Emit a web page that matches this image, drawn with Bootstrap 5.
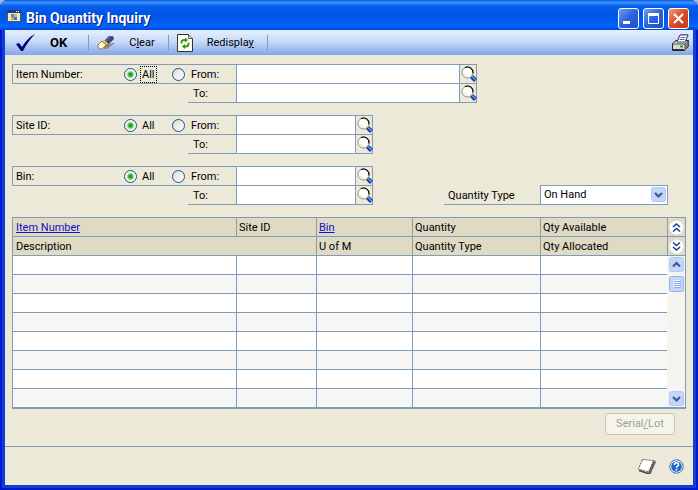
<!DOCTYPE html>
<html lang="en">
<head>
<meta charset="utf-8">
<meta name="viewport" content="width=device-width, initial-scale=1">
<title>Bin Quantity Inquiry</title>
<link href="https://cdn.jsdelivr.net/npm/bootstrap@5.3.0/dist/css/bootstrap.min.css" rel="stylesheet">
<style>
:root{--line:#7f9db9;--face:#ece9d8;--head:#dfdbc3}
body{font:11px/18px Roboto,"Liberation Sans",sans-serif;color:#000;background:#9db4d8}
button,input,select{font:inherit;color:inherit}
svg{display:block;flex:none}
.win{min-height:100vh;background:#0842d8;border-radius:8px 8px 0 0;border:solid #0019cf;border-width:0 2px 2px;padding:0 3px 3px}
.titlebar{height:30px;margin:0 -5px;padding:4px 5px 0 7px;border-radius:8px 8px 0 0;background:linear-gradient(#0a5ae0 0,#3c93ff 8%,#0661ee 20%,#0054e3 45%,#005cf5 75%,#0066ff 88%,#0046d0 100%)}
.titlebar h1{font:bold 14px/20px Roboto,"Liberation Sans",sans-serif;color:#fff;text-shadow:1px 1px #0a1883}
.wbtn{width:21px;height:21px;padding:0;border:1px solid #fff;border-radius:3px;background:linear-gradient(135deg,#6f9cf5,#2b62dd 50%,#2050c8)}
.wbtn.shut{background:linear-gradient(135deg,#f09a80,#da4b26 50%,#c03a16)}
.toolbar{height:25px;padding:0 3px 0 11px;background:linear-gradient(#e6effd,#c8daf9 45%,#84a6e6)}
.tool{border:0;background:none;padding:0;height:24px;display:flex;align-items:center;gap:14px;margin-right:13px}
.tool.ok{font-size:13px;font-weight:700;margin-right:21px}
.tool.print{margin-right:0}
.sep{width:1px;height:16px;background:#7e9bc8}
.face{background:var(--face)}
.inquiry{padding:9px 7px 0;display:grid;gap:12px}
.rng{display:grid;grid-template-columns:112px 48px 16px 48px minmax(0,1fr) 17px;grid-template-rows:19px 20px;border-right:1px solid transparent;max-width:361px;flex:1 1 361px}
.rng.wide{max-width:465px}
.rng>*{border:0 solid var(--line);border-top-width:1px}
.rng .what{border-left-width:1px;padding-left:3px;line-height:20px}
.rng .pad3{grid-column:span 3}
.rng .low{border-bottom-width:1px}
.rng .txt{padding-left:3px;line-height:20px}
.rng .to{padding-left:5px;line-height:20px}
.rng input[type=text]{border-left-width:1px;border-radius:0;background:#fff;min-width:0;width:100%;padding:0 4px}
.rng .look{padding:0 0 0 1px;width:18px;border-left-width:1px;border-right-width:1px;background:var(--face)}
.pickone{display:flex;align-items:center;gap:4px}
input[type=radio]{appearance:none;flex:none;width:13px;height:13px;margin:0;border:1px solid #21517f;border-radius:50%;background:linear-gradient(135deg,#dcdcd5,#fff)}
input[type=radio]:checked{background:radial-gradient(circle,#1f9f1f 1px,#3db83d 2px,#f6f6f2 4px)}
.pickone label{line-height:15px;padding:0 1px}
.dotted{outline:1px dotted #000}
.qt{margin-right:18px}
.qt label{width:96px;height:20px;padding-left:4px;line-height:22px;border-bottom:1px solid var(--line)}
.qt .pick{width:128px;height:20px}
.qt select{appearance:none;display:block;width:100%;height:20px;border:1px solid var(--line);border-radius:0;background:#fff;padding:0 20px 0 3px}
.qt svg{position:absolute;right:2px;top:2px;pointer-events:none}
.list{border:1px solid var(--line);border-bottom-width:2px}
.list table{table-layout:fixed;width:100%;border-collapse:separate;border-spacing:0}
.list td,.list th{height:19px;padding:0 3px;font-weight:400;line-height:18px;border-bottom:1px solid var(--line);border-left:1px solid var(--line);white-space:nowrap}
.list th{background:var(--head);padding:2px 2px 0;line-height:16px}
.list td:first-child,.list th:first-child{border-left:0}
.list th:first-child{padding-left:3px}
.list tbody td{background:#fff}
.list tbody tr:nth-child(even) td{background:#f6f7f4}
.list tbody tr:last-child td{border-bottom:0;height:18px}
.list a{color:#1010cc}
.c-site{width:80px}.c-bin{width:96px}.c-qty{width:128px}.c-av{width:127px}
.side{width:18px}
.rolls{background:var(--head);border-left:1px solid var(--line)}
.rolls button{width:100%;height:19px;padding:1px;border:0;border-bottom:1px solid var(--line);background:none;display:block}
.track{padding:1px 1px 1px 2px;background:#f5f4ee}
.track button{border:0;background:none;padding:0;display:block}
.serial{width:70px;height:22px;border:1px solid #c9c7ba;border-radius:3px;background:#f5f4ea;color:#a1a192;padding:0;font-size:11px;margin-right:10px}
.foot{height:39px;padding-right:9px;gap:12px;border-top:1px solid var(--line)}
.plain{border:0;background:none;padding:0}
</style>
</head>
<body>
<svg width="0" height="0" class="position-absolute" aria-hidden="true"><defs>
<g id="lens"><path d="M10.500 10.500l4 4" stroke="#12349c" stroke-width="4"/><path d="M11 10.500l3.500 3.500" stroke="#6fa4f4" stroke-width="1.200"/><circle cx="6.500" cy="6.500" r="5.500" fill="#fffef8" stroke="#888"/><path d="M4 1.600A5.500 5.500 0 0 1 11.900 7.500" fill="none" stroke="#000" stroke-width="1.100"/><path d="M3.500 8.500l2.500 2" stroke="#b8b0a0" stroke-dasharray="1"/></g>
<g id="box"><rect x=".5" y=".5" width="14" height="14" rx="2" fill="#c4d4fb" stroke="#b4c8f4"/></g>
</defs></svg>
<main class="win d-flex flex-column">
<header class="titlebar d-flex align-items-start">
<svg class="mt-1 me-1" width="15" height="16"><path d="M.5 2.500h13v11H.5z" fill="#ece9d8" stroke="#555"/><path d="M0 2h14v3H0z" fill="#243c78"/><path d="M9 3h1v1H9zM11 3h1v1h-1z" fill="#fff"/><path d="M4 6h3v3H4z" fill="#3d8be8"/><path d="M7 6h3v3H7z" fill="#e8b92c"/><path d="M4 9h3v3H4z" fill="#e0a020"/><path d="M7 9h3v3H7z" fill="#2f7adc"/></svg>
<h1 class="m-0 flex-grow-1 pt-1">Bin Quantity Inquiry</h1>
<div class="d-flex gap-1 pt-1 pe-1">
<button type="button" class="wbtn" aria-label="Minimize"><svg width="19" height="19"><path d="M4 12h7v3H4z" fill="#fff"/></svg></button>
<button type="button" class="wbtn" aria-label="Maximize"><svg width="19" height="19"><path d="M4.500 4.500h10v10h-10z" fill="none" stroke="#fff"/><path d="M4 4h11v3H4z" fill="#fff"/></svg></button>
<button type="button" class="wbtn shut" aria-label="Close"><svg width="19" height="19"><path d="M5 5l9 9M14 5l-9 9" stroke="#fff" stroke-width="2.200"/></svg></button>
</div>
</header>
<nav class="toolbar d-flex align-items-center">
<button type="button" class="tool ok"><svg width="20" height="20"><path d="M0 11l3-1 3 4C9 9 13 4 19 1 14 6 10 12 7 18H5z" fill="#000080"/></svg>OK</button>
<i class="sep me-2"></i>
<button type="button" class="tool"><svg width="18" height="18"><path d="M7 12l9-3h2l-8 6H7z" fill="#8b8b86"/><path d="M7 7L12 2h4l1 3-7 7z" fill="#45457e"/><path d="M9 7l5-5" stroke="#7070aa"/><path d="M6.500 6.500l4 4" stroke="#e8c331" stroke-width="2"/><path d="M1 11l4-4 4 4-4 4H2L1 13z" fill="#fff8d0" stroke="#8a7b48"/></svg><span>C<u>l</u>ear</span></button>
<i class="sep me-2"></i>
<button type="button" class="tool"><svg width="16" height="18"><path d="M.5.500h11l4 4v13H.5z" fill="#fffff0" stroke="#333"/><path d="M11.500.500v4h4" fill="#ddd" stroke="#555"/><path d="M4.500 9.500V8q0-2 3-2h1M11.500 8.500V10q0 2.500-3 2.500H7" fill="none" stroke="#269326" stroke-width="1.800"/><path d="M8 3.500l3 2.500-3 2.500zM8 10l-3 2.500L8 15z" fill="#269326"/></svg><span>Redispla<u>y</u></span></button>
<i class="sep"></i>
<button type="button" class="tool print ms-auto" aria-label="Print"><svg width="19" height="18"><path d="M6 8L9 1h8l-3 7z" fill="#fff" stroke="#446"/><path d="M9.500 3.500h5M8.500 5.500h5" stroke="#3b6dc4"/><path d="M1.500 9.500L5 6.500h12.500v6l-4 4h-12z" fill="#d8d8d2" stroke="#222"/><path d="M6 8L9 1h8l-3 7z" fill="#fff" stroke="#446"/><path d="M9.500 3.500h5M8.500 5.500h5" stroke="#3b6dc4"/><path d="M2 10h12l3-3M14 10v6" fill="none" stroke="#555"/><path d="M14 11l3.500-4v5L14 16z" fill="#777"/><path d="M9 12.500h3" stroke="#16b51a" stroke-width="2"/><path d="M2 15.500h11" stroke="#333"/></svg></button>
</nav>
<form class="face flex-grow-1 d-flex flex-column">
<div class="inquiry">
<div class="rng wide" role="group" aria-label="Item Number">
<div class="what">Item Number:</div>
<div class="pickone"><input type="radio" name="item" id="ia" checked><label for="ia" class="dotted">All</label></div>
<div class="pickone"><input type="radio" name="item" id="if"></div><label for="if" class="txt">From:</label>
<input type="text" aria-label="Item Number from"><button type="button" class="look" aria-label="Look up item from"><svg width="16" height="16"><use href="#lens"/></svg></button>
<div class="pad3"></div><label for="it" class="to low">To:</label><input type="text" class="low" id="it"><button type="button" class="look low" aria-label="Look up item to"><svg width="16" height="16"><use href="#lens"/></svg></button>
</div>
<div class="rng" role="group" aria-label="Site ID">
<div class="what">Site ID:</div>
<div class="pickone"><input type="radio" name="site" id="sa" checked><label for="sa">All</label></div>
<div class="pickone"><input type="radio" name="site" id="sf"></div><label for="sf" class="txt">From:</label>
<input type="text" aria-label="Site ID from"><button type="button" class="look" aria-label="Look up site from"><svg width="16" height="16"><use href="#lens"/></svg></button>
<div class="pad3"></div><label for="st" class="to low">To:</label><input type="text" class="low" id="st"><button type="button" class="look low" aria-label="Look up site to"><svg width="16" height="16"><use href="#lens"/></svg></button>
</div>
<div class="d-flex justify-content-between align-items-end">
<div class="rng" role="group" aria-label="Bin">
<div class="what">Bin:</div>
<div class="pickone"><input type="radio" name="bin" id="ba" checked><label for="ba">All</label></div>
<div class="pickone"><input type="radio" name="bin" id="bf"></div><label for="bf" class="txt">From:</label>
<input type="text" aria-label="Bin from"><button type="button" class="look" aria-label="Look up bin from"><svg width="16" height="16"><use href="#lens"/></svg></button>
<div class="pad3"></div><label for="bt" class="to low">To:</label><input type="text" class="low" id="bt"><button type="button" class="look low" aria-label="Look up bin to"><svg width="16" height="16"><use href="#lens"/></svg></button>
</div>
<div class="qt d-flex"><label for="qty">Quantity Type</label><div class="pick position-relative"><select id="qty"><option>On Hand</option></select><svg width="15" height="16"><use href="#box"/><path d="M4 6l3.500 3.500L11 6" fill="none" stroke="#3f5a8c" stroke-width="2.200"/></svg></div></div>
</div>
<div class="list d-flex">
<table>
<colgroup><col><col class="c-site"><col class="c-bin"><col class="c-qty"><col class="c-av"></colgroup>
<thead>
<tr><th><a href="#">Item Number</a></th><th>Site ID</th><th><a href="#">Bin</a></th><th>Quantity</th><th>Qty Available</th></tr>
<tr><th colspan="2">Description</th><th>U of M</th><th>Quantity Type</th><th>Qty Allocated</th></tr>
</thead>
<tbody>
<tr><td></td><td></td><td></td><td></td><td></td></tr>
<tr><td></td><td></td><td></td><td></td><td></td></tr>
<tr><td></td><td></td><td></td><td></td><td></td></tr>
<tr><td></td><td></td><td></td><td></td><td></td></tr>
<tr><td></td><td></td><td></td><td></td><td></td></tr>
<tr><td></td><td></td><td></td><td></td><td></td></tr>
<tr><td></td><td></td><td></td><td></td><td></td></tr>
<tr><td></td><td></td><td></td><td></td><td></td></tr>
</tbody>
</table>
<div class="side d-flex flex-column flex-shrink-0">
<div class="rolls">
<button type="button" aria-label="Hide details"><svg width="15" height="15"><circle cx="7.500" cy="7.500" r="7" fill="#fff"/><path d="M4 7l3.500-3L11 7M4 11.500l3.500-3 3.500 3" fill="none" stroke="#1b3f96" stroke-width="1.600"/></svg></button>
<button type="button" aria-label="Show details"><svg width="15" height="15"><circle cx="7.500" cy="7.500" r="7" fill="#fff"/><path d="M4 3.500l3.500 3 3.500-3M4 8l3.500 3L11 8" fill="none" stroke="#1b3f96" stroke-width="1.600"/></svg></button>
</div>
<div class="track d-flex flex-column flex-grow-1">
<button type="button" aria-label="Scroll up"><svg width="15" height="15"><use href="#box"/><path d="M4 9.500L7.500 6 11 9.500" fill="none" stroke="#3f5a8c" stroke-width="2.200"/></svg></button>
<svg class="mt-1" width="15" height="16"><rect x=".5" y=".5" width="14" height="15" rx="2" fill="#c4d4fb" stroke="#98b0e8"/><path d="M4 4.500h7M4 6.500h7M4 8.500h7M4 10.500h7" stroke="#eef4fe"/><path d="M5 5.500h7M5 7.500h7M5 9.500h7M5 11.500h7" stroke="#8caeea"/></svg>
<button type="button" class="mt-auto" aria-label="Scroll down"><svg width="15" height="15"><use href="#box"/><path d="M4 6l3.500 3.500L11 6" fill="none" stroke="#3f5a8c" stroke-width="2.200"/></svg></button>
</div>
</div>
</div>
</div>
<div class="d-flex justify-content-end px-2 pt-1 pb-1 mb-auto"><button type="button" class="serial" disabled>Serial<u>/</u>Lot</button></div>
<footer class="foot d-flex align-items-center justify-content-end">
<button type="button" class="plain" aria-label="Note"><svg width="20" height="16"><path d="M17 2l2 2-5 11-3-1z" fill="#66665e"/><path d="M2 12.500l9 3 3-1" fill="none" stroke="#44443c" stroke-width="1.500"/><path d="M5.500 1.500l11 1-5 11.500L1.500 11z" fill="#fff" stroke="#555" stroke-dasharray="2 1"/></svg></button>
<button type="button" class="plain" aria-label="Help"><svg width="15" height="15"><circle cx="7.500" cy="7.500" r="6.700" fill="#fff" stroke="#2a67c9"/><circle cx="7.500" cy="7.500" r="5.300" fill="#2463c8"/><path d="M5.500 6q0-2.200 2-2.200t2 1.900q0 1-1.200 1.700-.8.400-.8 1.300M7.500 9.800v1.700" fill="none" stroke="#fff" stroke-width="1.600"/></svg></button>
</footer>
</form>
</main>
<script src="https://cdn.jsdelivr.net/npm/bootstrap@5.3.0/dist/js/bootstrap.bundle.min.js"></script>
</body>
</html>
